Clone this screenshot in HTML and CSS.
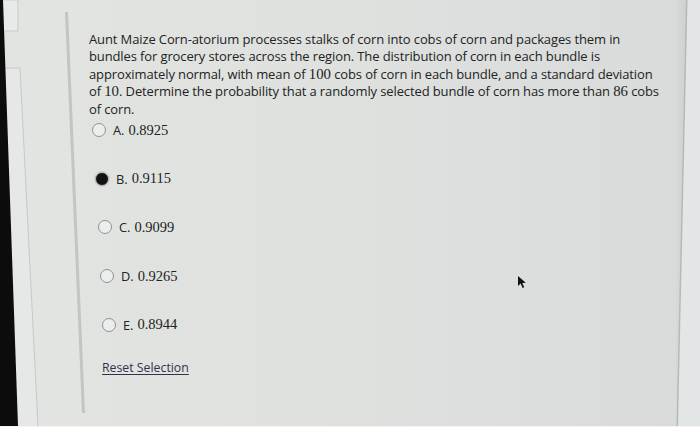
FILE: index.html
```html
<!DOCTYPE html>
<html lang="en">
<head>
<meta charset="utf-8">
<title>Question</title>
<link rel="stylesheet" href="styles.css">
</head>
<body>
<div class="screen">
  <svg class="bezel" width="86" height="426" viewBox="0 0 86 426" aria-hidden="true">
    <rect x="0" y="0" width="86" height="426" fill="#e2e4e2"/>
    <rect x="2" y="0" width="16" height="31" fill="#e8eaea" stroke="#c9cbca" stroke-width="1"/>
    <polygon points="5,68 20,68 38,426 5,426" fill="#e6e8e7"/>
    <polyline points="5,68 20,68 38,426" fill="none" stroke="#c6c8c7" stroke-width="1"/>
    <polygon points="0,0 3,0 18,426 0,426" fill="#0c0c0c"/>
    <polygon points="65,12 68,12 85,413 82,413" fill="#c3c5c3"/>
  </svg>
  <main class="content">
    <p class="question">Aunt Maize Corn-atorium processes stalks of corn into cobs of corn and packages them in<br>bundles for grocery stores across the region. The distribution of corn in each bundle is<br>approximately normal, with mean of <span class="num">100</span> cobs of corn in each bundle, and a standard deviation<br>of <span class="num">10</span>. Determine the probability that a randomly selected bundle of corn has more than <span class="num">86</span> cobs<br>of corn.</p>
    <ul class="options">
      <li class="opt opt-a"><span class="radio"></span><span class="label">A.</span><span class="num">0.8925</span></li>
      <li class="opt opt-b"><span class="radio checked"></span><span class="label">B.</span><span class="num">0.9115</span></li>
      <li class="opt opt-c"><span class="radio"></span><span class="label">C.</span><span class="num">0.9099</span></li>
      <li class="opt opt-d"><span class="radio"></span><span class="label">D.</span><span class="num">0.9265</span></li>
      <li class="opt opt-e"><span class="radio"></span><span class="label">E.</span><span class="num">0.8944</span></li>
    </ul>
    <a class="reset" href="#">Reset Selection</a>
    <svg class="cursor" width="10" height="14" viewBox="0 0 10 14" aria-hidden="true">
      <polygon points="1,1 1,11 3.6,8.6 5.6,13 7.2,12.2 5.3,8 8.8,7.8" fill="#111"/>
    </svg>
  </main>
  <svg class="edge" width="24" height="426" viewBox="0 0 24 426" aria-hidden="true">
    <defs>
      <linearGradient id="sh" x1="0" x2="1" y1="0" y2="0">
        <stop offset="0" stop-color="#d6d9d8"/>
        <stop offset="1" stop-color="#c2c6c6"/>
      </linearGradient>
    </defs>
    <rect x="0" y="0" width="24" height="426" fill="url(#sh)"/>
    <polygon points="11,0 24,0 24,426 1,426" fill="#e3e6e6"/>
    <polygon points="10,0 11.5,0 2,426 0.5,426" fill="#b5b9b9"/>
  </svg>
</div>
<div class="floor"></div>
</body>
</html>
```
FILE: styles.css
```css
* { box-sizing: border-box; }
html, body {
  margin: 0;
  padding: 0;
  width: 700px;
  height: 427px;
  overflow: hidden;
  background: #f4f4f3;
}
.screen {
  display: flex;
  height: 426px;
  background: linear-gradient(90deg, #e2e4e2 0%, #dfe1df 50%, #d8dbda 100%);
}
.bezel { flex: none; display: block; }
.edge { flex: none; display: block; }
.floor { height: 1px; background: #f4f4f3; }

.content {
  flex: 1;
  min-width: 0;
  position: relative;
  padding: 31px 0 0 3px;
  font-family: "Open Sans", "Liberation Sans", sans-serif;
  color: #222323;
}
.question {
  margin: 0;
  font-size: 13px;
  line-height: 17.4px;
  letter-spacing: -0.12px;
  white-space: nowrap;
}
.num {
  font-family: "Liberation Serif", "Times New Roman", serif;
  font-size: 14.8px;
  letter-spacing: 0;
}
.options {
  list-style: none;
  margin: 2px 0 0;
  padding: 0;
  display: flex;
  flex-direction: column;
  gap: 28.7px;
}
.opt {
  display: flex;
  align-items: center;
  height: 20px;
}
.opt-a { padding-left: 3px; }
.opt-b { padding-left: 6px; }
.opt-c { padding-left: 9px; }
.opt-d { padding-left: 11px; }
.opt-e { padding-left: 13px; }
.radio {
  flex: none;
  width: 14px;
  height: 14px;
  border-radius: 50%;
  border: 1.3px solid #8f9290;
  background: #eceeed;
  margin-right: 7px;
}
.radio.checked {
  background: #111;
  border: 1.5px solid #b9bbba;
  box-shadow: 0 0 0 1px #d0d2d1;
}
.label {
  font-size: 12.8px;
  margin-right: 4px;
}
.opt .num { font-size: 14.5px; }
.reset {
  display: inline-block;
  margin: 24px 0 0 13px;
  font-size: 12.3px;
  color: #2f344c;
  text-decoration: underline;
  text-underline-offset: 2px;
}
.cursor {
  position: absolute;
  left: 431px;
  top: 275px;
}
```
